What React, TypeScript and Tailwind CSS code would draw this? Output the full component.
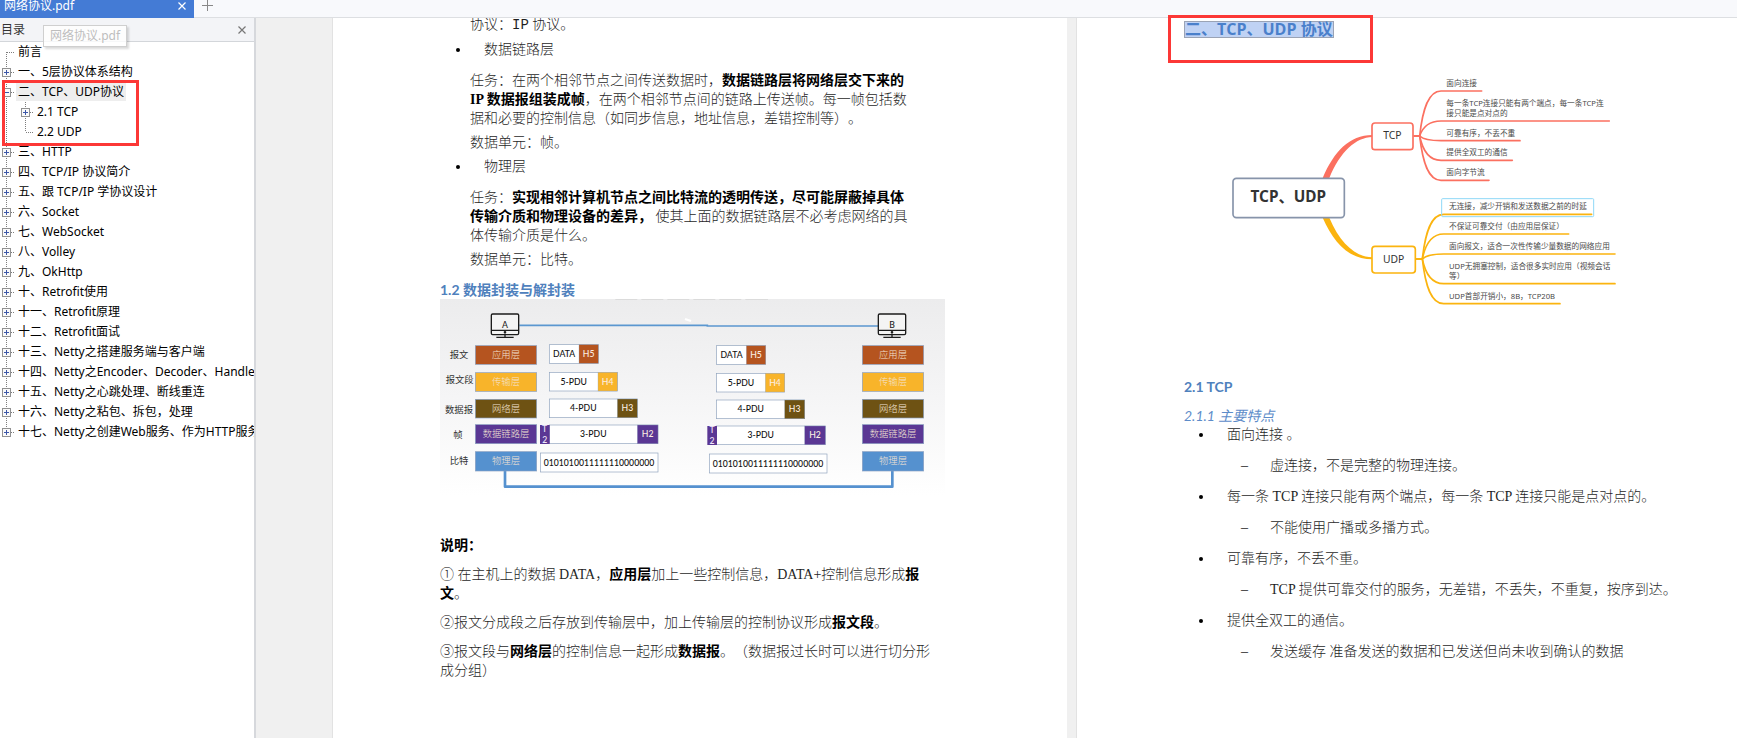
import React from "react";

type Node = { title: string; leaf?: boolean; open?: boolean; depth?: number; last?: boolean; first?: boolean; selected?: boolean };

const outline: Node[] = [
  { title: "前言", leaf: true, first: true },
  { title: "一、5层协议体系结构" },
  { title: "二、TCP、UDP协议", open: true, selected: true },
  { title: "2.1 TCP", depth: 1 },
  { title: "2.2 UDP", depth: 1, leaf: true, last: true },
  { title: "三、HTTP" },
  { title: "四、TCP/IP 协议简介" },
  { title: "五、跟 TCP/IP 学协议设计" },
  { title: "六、Socket" },
  { title: "七、WebSocket" },
  { title: "八、Volley" },
  { title: "九、OkHttp" },
  { title: "十、Retrofit使用" },
  { title: "十一、Retrofit原理" },
  { title: "十二、Retrofit面试" },
  { title: "十三、Netty之搭建服务端与客户端" },
  { title: "十四、Netty之Encoder、Decoder、Handler" },
  { title: "十五、Netty之心跳处理、断线重连" },
  { title: "十六、Netty之粘包、拆包，处理" },
  { title: "十七、Netty之创建Web服务、作为HTTP服务器", last: true },
];

function Branch({ first, last, leaf, open }: { first?: boolean; last?: boolean; leaf?: boolean; open?: boolean }) {
  return (
    <svg className="block" width="18" height="20" viewBox="0 0 18 20" aria-hidden="true" shapeRendering="crispEdges">
      <path d={`M6.5 ${first ? 10 : 0}V${last ? 10 : 20}`} stroke="#7d7d7d" strokeDasharray="1 1" />
      <path d="M7 10.5H15" stroke="#7d7d7d" strokeDasharray="1 1" />
      {!leaf && (
        <>
          <rect x="2.5" y="6.5" width="8" height="8" fill="#fafafa" stroke="#919191" />
          <path d={open ? "M4 10.5h5" : "M4 10.5h5M6.5 8v5"} stroke="#3c57a8" />
        </>
      )}
    </svg>
  );
}

function OutlineRow({ node }: { node: Node }) {
  return (
    <li className="flex h-5 items-center whitespace-nowrap">
      {node.depth ? (
        <svg className="mr-px block shrink-0" width="18" height="20" viewBox="0 0 18 20" aria-hidden="true" shapeRendering="crispEdges">
          <path d="M6.5 0V20" stroke="#7d7d7d" strokeDasharray="1 1" />
        </svg>
      ) : null}
      {node.leaf ? (
        <span className="shrink-0">
          <Branch {...node} />
        </span>
      ) : (
        <button type="button" className="shrink-0" aria-label={node.open ? "收起" : "展开"}>
          <Branch {...node} />
        </button>
      )}
      <a href="#page" className={node.selected ? "-ml-0.5 bg-[#eeeeee] pl-0.5 pr-0.5 leading-[18px]" : "leading-[18px]"}>
        {node.title}
      </a>
    </li>
  );
}

const layers = [
  { unit: "报文", name: "应用层", color: "#b5541f", y: 197, h: 56, ly: 233, ux: 59 },
  { unit: "报文段", name: "传输层", color: "#f8b42a", y: 278, h: 56, ly: 310, ux: 47 },
  { unit: "数据报", name: "网络层", color: "#6e5213", y: 358, h: 56, ly: 398, ux: 45 },
  { unit: "帧", name: "数据链路层", color: "#5a3794", y: 434, h: 57, ly: 474, ux: 70 },
  { unit: "比特", name: "物理层", color: "#5591cf", y: 515, h: 58, ly: 551, ux: 59 },
];

const pdus = [
  { label: "DATA", head: "H5", color: "#b5541f", y: 194, mid: 447, end: 505 },
  { label: "5-PDU", head: "H4", color: "#f8b42a", y: 277, mid: 504, end: 562 },
  { label: "4-PDU", head: "H3", color: "#6e5213", y: 357, mid: 562, end: 622 },
  { label: "3-PDU", head: "H2", color: "#5a3794", y: 435, mid: 622, end: 684 },
];

function Stack({ dx, dy, bitsDx }: { dx: number; dy: number; bitsDx: number }) {
  return (
    <g transform={`translate(${dx} ${dy})`} textAnchor="middle" stroke="none">
      {pdus.map((p) => (
        <g key={p.label}>
          <rect x="358" y={p.y} width={p.end - 358} height="56" fill="#fff" stroke="#8fa3bd" strokeWidth="2" />
          <rect x={p.mid} y={p.y} width={p.end - p.mid} height="56" fill={p.color} stroke="#8fa3bd" />
          <text x={(358 + p.mid) / 2} y={p.y + 37} fill="#111">{p.label}</text>
          <text x={(p.mid + p.end) / 2} y={p.y + 37} fill="#fbeee2">{p.head}</text>
        </g>
      ))}
      <rect x="330" y="435" width="29" height="57" fill="#5a3794" />
      <text x="344" y="456" fill="#efe6fa">T</text>
      <text x="344" y="488" fill="#efe6fa">2</text>
      <g transform={`translate(${bitsDx} 0)`}>
        <rect x="331" y="519" width="353" height="57" fill="#fff" stroke="#8fa3bd" strokeWidth="2" />
        <text x="507" y="557" fill="#111">0101010011111110000000</text>
      </g>
    </g>
  );
}

function Monitor({ x, label }: { x: number; label: string }) {
  return (
    <g stroke="#1c1c1c" fill="none" strokeWidth="4">
      <rect x={x} y="102" width="82" height="62" rx="4" fill="#f4f4f4" />
      <path d={`M${x} 151h82M${x + 41} 164v8M${x + 15} 172h52`} />
      <circle cx={x + 41} cy="157" r="2" />
      <text x={x + 41} y="144" stroke="none" fill="#222" textAnchor="middle">{label}</text>
    </g>
  );
}

function LayerFigure() {
  return (
    <svg className="block w-[505px] font-['Lato','Noto_Sans_CJK_SC',sans-serif] font-medium" viewBox="30 57 1515 591" role="img" aria-label="数据封装与解封装" fontSize="26">
      <defs>
        <linearGradient id="paper" x1="0" y1="0" x2="0" y2="1">
          <stop offset="0" stopColor="#ececed" />
          <stop offset="0.5" stopColor="#f5f5f6" />
          <stop offset="0.85" stopColor="#fcfcfc" />
          <stop offset="1" stopColor="#ffffff" />
        </linearGradient>
      </defs>
      <rect x="30" y="57" width="1515" height="591" fill="url(#paper)" />
      <path d="M556 58h66M634 58h66M712 58h66M790 58h66M868 58h66M946 58h68" stroke="#d8d8d8" strokeWidth="3" />
      <path d="M268 136H832V138H1345" stroke="#5b97d0" strokeWidth="5" fill="none" />
      <path d="M765 117l18 6" stroke="#fff" strokeWidth="7" />
      <path d="M225 573V620H1387V573" stroke="#5591cf" strokeWidth="8" fill="none" strokeLinejoin="round" />
      <Monitor x={184} label="A" />
      <Monitor x={1345} label="B" />
      {layers.map((l) => (
        <g key={l.name} fontSize="28" fontWeight="400">
          <text x={l.ux} y={l.ly} fill="#333">{l.unit}</text>
          <rect x="136" y={l.y} width="184" height={l.h} fill={l.color} stroke="#8aa0c0" strokeWidth="2" />
          <rect x="1297" y={l.y} width="184" height={l.h} fill={l.color} stroke="#8aa0c0" strokeWidth="2" />
          <text x="228" y={l.y + 37} fill="#f3e3d3" fontWeight="300" textAnchor="middle">{l.name}</text>
          <text x="1389" y={l.y + 37} fill="#f3e3d3" fontWeight="300" textAnchor="middle">{l.name}</text>
        </g>
      ))}
      <Stack dx={0} dy={0} bitsDx={0} />
      <Stack dx={502} dy={3} bitsDx={5} />
    </svg>
  );
}

const tcpLeaves = [
  { y: 273, end: 965, lines: ["面向连接"] },
  { y: 363, end: 1348, lines: ["每一条TCP连接只能有两个端点，每一条TCP连", "接只能是点对点的"] },
  { y: 422, end: 1080, lines: ["可靠有序，不丢不重"] },
  { y: 481, end: 1057, lines: ["提供全双工的通信"] },
  { y: 541, end: 987, lines: ["面向字节流"] },
];

const udpLeaves = [
  { y: 643, end: 1295, lines: ["无连接，减少开销和发送数据之前的时延"] },
  { y: 702, end: 1226, lines: ["不保证可靠交付（由应用层保证）"] },
  { y: 762, end: 1365, lines: ["面向报文，适合一次性传输少量数据的网络应用"] },
  { y: 851, end: 1365, lines: ["UDP无拥塞控制，适合很多实时应用（视频会话", "等）"] },
  { y: 911, end: 1200, lines: ["UDP首部开销小，8B，TCP20B"] },
];

function Leaves({ items, hub, hubY, color }: { items: typeof tcpLeaves; hub: number; hubY: number; color: string }) {
  return (
    <g>
      {items.map((l) => (
        <g key={l.y}>
          <path
            d={`M${hub} ${hubY}C${hub + 9} ${hubY + (l.y - hubY) * 0.6} ${hub + 26} ${l.y} ${hub + 64} ${l.y}H${l.end}`}
            stroke={color}
            strokeWidth="5"
            fill="none"
            strokeLinecap="round"
          />
          {l.lines.map((t, i) => (
            <text key={t} x={hub + 80} y={l.y - 15 - (l.lines.length - 1 - i) * 30} fill="#4a4a4a" fontSize="23">
              {t}
            </text>
          ))}
        </g>
      ))}
    </g>
  );
}

function MindMap() {
  return (
    <svg className="block w-[515px] font-['Noto_Sans','Noto_Sans_CJK_SC',sans-serif] font-normal" viewBox="72 189 1545 831" role="img" aria-label="TCP、UDP 思维导图">
      <path d="M488 534C522 455 568 405 637 405V411C588 412 540 455 508 534Z" fill="#fb7060" />
      <path d="M488 653C522 730 568 778 637 778V772C588 771 540 730 508 653Z" fill="#fbb40f" />
      <path d="M760 408H780" stroke="#fb7060" strokeWidth="6" />
      <path d="M766 777H788" stroke="#fbb40f" strokeWidth="6" />
      <Leaves items={tcpLeaves} hub={779} hubY={408} color="#fb7060" />
      <Leaves items={udpLeaves} hub={787} hubY={777} color="#fbb40f" />
      <rect x="845" y="596" width="456" height="54" rx="3" fill="none" stroke="#8fd8f7" strokeWidth="3" />
      <rect x="219" y="535" width="334" height="118" rx="10" fill="#fff" stroke="#8794aa" strokeWidth="5" />
      <rect x="636" y="369" width="123" height="80" rx="9" fill="#fff" stroke="#fb7060" strokeWidth="5" />
      <rect x="636" y="739" width="130" height="80" rx="9" fill="#fff" stroke="#fbb40f" strokeWidth="5" />
      <g textAnchor="middle" fill="#333">
        <text x="385" y="607" fontSize="46" fontWeight="700">TCP、UDP</text>
        <text x="697" y="418" fontSize="31">TCP</text>
        <text x="701" y="788" fontSize="31">UDP</text>
      </g>
    </svg>
  );
}

function Bullet({ children }: { children: React.ReactNode }) {
  return (
    <li className="flex items-center gap-6 pl-4">
      <span className="size-1 rounded-full bg-black" />
      <span>{children}</span>
    </li>
  );
}

const features: { text: string; note: string }[] = [
  { text: "面向连接 。", note: "虚连接，不是完整的物理连接。" },
  { text: "每一条 TCP 连接只能有两个端点，每一条 TCP 连接只能是点对点的。", note: "不能使用广播或多播方式。" },
  { text: "可靠有序，不丢不重。", note: "TCP 提供可靠交付的服务，无差错，不丢失，不重复，按序到达。" },
  { text: "提供全双工的通信。", note: "发送缓存 准备发送的数据和已发送但尚未收到确认的数据" },
];

function B({ children }: { children: React.ReactNode }) {
  return <strong className="font-bold text-black">{children}</strong>;
}

export default function App() {
  return (
    <div className="flex h-screen flex-col overflow-hidden bg-[#f0f0f0] font-['Noto_Sans','Noto_Sans_CJK_SC',sans-serif] text-xs text-black [text-spacing-trim:space-all]">
      <header className="flex h-[18px] shrink-0 items-start border-b border-[#dddfe2] bg-[#f8f9fc]">
        <div className="flex h-[18px] w-[194px] shrink-0 items-start justify-between bg-[#447bd5] pl-1 pr-2 text-white">
          <span className="leading-3">网络协议.pdf</span>
          <button type="button" aria-label="关闭标签" className="pt-0.5">
            <svg className="block" width="8" height="8" viewBox="0 0 8 8" stroke="currentColor" strokeWidth="1.2">
              <path d="M.5 .5l7 7M7.5 .5l-7 7" />
            </svg>
          </button>
        </div>
        <button type="button" aria-label="新建标签" className="pl-2">
          <svg className="block" width="11" height="11" viewBox="0 0 11 11" stroke="#888">
            <path d="M5.5 0v11M0 5.5h11" />
          </svg>
        </button>
      </header>

      <div className="flex min-h-0 flex-1">
        <aside className="relative flex w-64 shrink-0 flex-col border-r-2 border-[#d6d8dc] bg-white">
          <div className="flex h-6 shrink-0 items-center justify-between border-b border-[#d3d6da] bg-[#f3f4f7] pl-px pr-2 text-[#333]">
            <h2>目录</h2>
            <button type="button" aria-label="关闭目录">
              <svg className="block" width="8" height="8" viewBox="0 0 8 8" stroke="#777" strokeWidth="1.2">
                <path d="M.5 .5l7 7M7.5 .5l-7 7" />
              </svg>
            </button>
          </div>
          <nav aria-label="目录" className="overflow-hidden">
            <ul>
              {outline.map((n) => (
                <OutlineRow key={n.title} node={n} />
              ))}
            </ul>
          </nav>
          <div role="tooltip" className="absolute left-[43px] top-[7px] border border-[#cfcfcf] bg-white/80 px-[6px] leading-5 text-[#bdbdbd] shadow-[2px_2px_2px_rgba(0,0,0,0.15)]">
            网络协议.pdf
          </div>
          <div className="absolute left-0.5 top-[62px] h-[66px] w-[137px] border-3 border-[#fc3836]" />
        </aside>

        <main id="page" className="flex min-w-0 flex-1 gap-[9px] overflow-hidden pl-[76px] font-['Liberation_Serif','Noto_Sans_CJK_SC',serif] text-sm leading-[19px] font-light text-[#1f1f1f]">
          <article className="w-[735px] shrink-0 border-l border-[#e2e2e2] bg-white pl-[107px]">
            <div className="pl-[30px]">
              <p className="leading-[14px]">协议：<span className="font-['Liberation_Mono']">IP</span> 协议。</p>
            </div>
            <ul className="mt-2">
              <Bullet>数据链路层</Bullet>
            </ul>
            <div className="pl-[30px]">
              <p className="mt-3">
                任务：在两个相邻节点之间传送数据时，<B>数据链路层将网络层交下来的</B>
                <br />
                <B>IP 数据报组装成帧</B>，在两个相邻节点间的链路上传送帧。每一帧包括数
                <br />
                据和必要的控制信息（如同步信息，地址信息，差错控制等）。
              </p>
              <p className="mt-[5px]">数据单元：帧。</p>
            </div>
            <ul className="mt-[5px]">
              <Bullet>物理层</Bullet>
            </ul>
            <div className="pl-[30px]">
              <p className="mt-3">
                任务：<B>实现相邻计算机节点之间比特流的透明传送，尽可能屏蔽掉具体</B>
                <br />
                <B>传输介质和物理设备的差异，</B> 使其上面的数据链路层不必考虑网络的具
                <br />
                体传输介质是什么。
              </p>
              <p className="mt-[5px]">数据单元：比特。</p>
            </div>
            <h2 className="mt-[11px] font-['Lato','Noto_Sans_CJK_SC',sans-serif] font-bold text-[#4f81bd]">1.2 数据封装与解封装</h2>
            <LayerFigure />
            <div className="mt-10 flex flex-col gap-[10px]">
              <p><B>说明：</B></p>
              <p>
                ① 在主机上的数据 DATA，<B>应用层</B>加上一些控制信息，DATA+控制信息形成<B>报</B>
                <br />
                <B>文</B>。
              </p>
              <p>②报文分成段之后存放到传输层中，加上传输层的控制协议形成<B>报文段</B>。</p>
              <p>
                ③报文段与<B>网络层</B>的控制信息一起形成<B>数据报</B>。（数据报过长时可以进行切分形
                <br />
                成分组）
              </p>
            </div>
          </article>

          <article className="relative min-w-0 flex-1 overflow-hidden border-l border-[#e2e2e2] bg-white pl-[107px] whitespace-nowrap">
            <h1 className="mt-[3px] w-fit border border-[#9aa3b5] bg-[#bfd2f4] font-['Open_Sans','Noto_Sans_CJK_SC',sans-serif] text-base leading-[15px] font-bold text-[#4a80cb]">
              二、TCP、UDP 协议
            </h1>
            <div className="mt-[25px]">
              <MindMap />
            </div>
            <h2 className="mt-[37px] font-['Lato','Noto_Sans_CJK_SC',sans-serif] font-bold text-[#4f81bd]">2.1 TCP</h2>
            <h3 className="mt-[10px] font-['Lato','Noto_Sans_CJK_SC',sans-serif] font-normal italic text-[#5d8cc9]">2.1.1 主要特点</h3>
            <ul className="flex flex-col gap-3">
              {features.map((f) => (
                <li key={f.text} className="flex flex-col gap-3 pl-[15px]">
                  <div className="flex items-center gap-6">
                    <span className="size-1 rounded-full bg-black" />
                    <span>{f.text}</span>
                  </div>
                  <div className="flex gap-[22px] pl-[42px]">
                    <span>–</span>
                    <span>{f.note}</span>
                  </div>
                </li>
              ))}
            </ul>
          </article>
        </main>
      </div>
      <div className="pointer-events-none absolute left-[1168px] top-[15px] h-12 w-[205px] border-3 border-[#fc3836]" />
    </div>
  );
}
